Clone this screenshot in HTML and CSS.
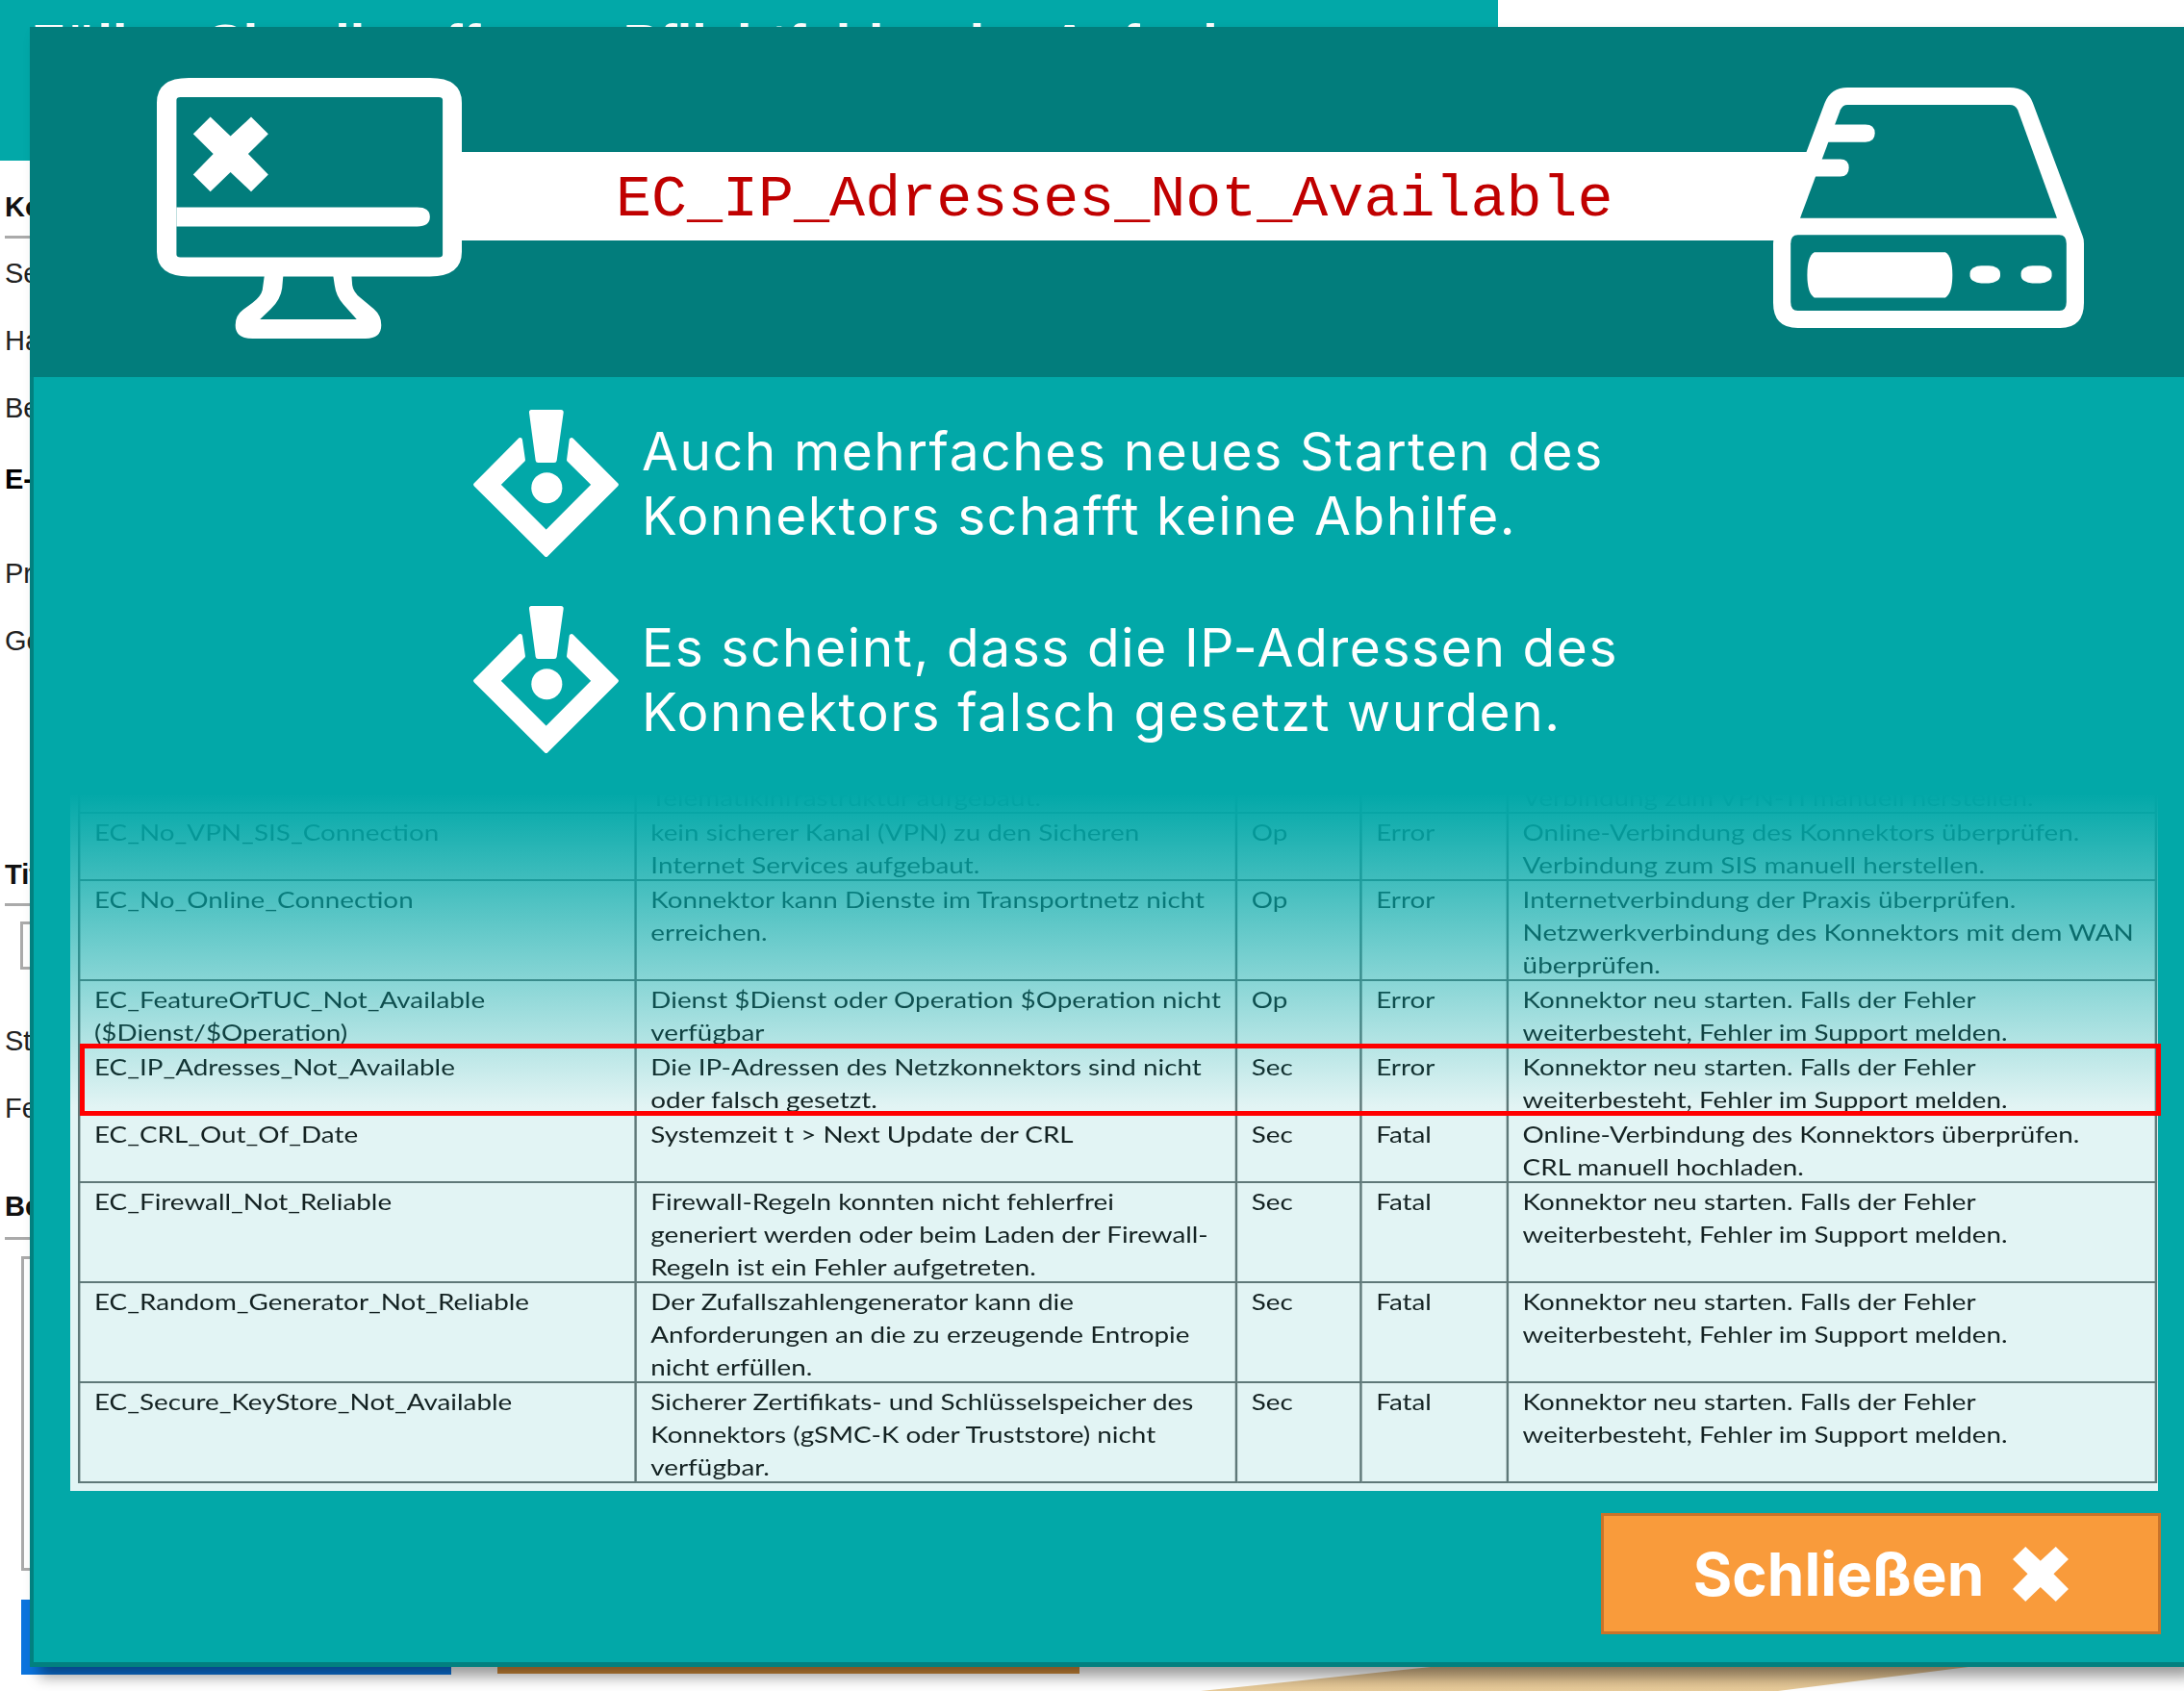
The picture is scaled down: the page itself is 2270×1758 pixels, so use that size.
FILE: index.html
```html
<!DOCTYPE html>
<html lang="de">
<head>
    <meta charset="UTF-8">
    <title>EC_IP_Adresses_Not_Available</title>
    <link rel="stylesheet" href="styles.css">
</head>
<body>
    <!-- Form page behind the dialog, only a sliver of it stays visible -->
    <div class="page">
        <div class="page-band"><h1>Füllen Sie alle offenen Pflichtfelder der Aufgabe</h1></div>
        <div class="form">
            <div class="section-head head-ko">Konnektor</div>
            <div class="field">Seriennummer</div>
            <div class="field">Hardware</div>
            <div class="field">Betreiber</div>
            <div class="label-bold">E-Mail</div>
            <div class="field field-pr">Praxis</div>
            <div class="field">Gerät</div>
            <div class="section-head head-ti">Titel</div>
            <div class="input-box"></div>
            <div class="field field-st">Status</div>
            <div class="field">Fehler</div>
            <div class="section-head head-be">Beschreibung</div>
            <div class="text-box"></div>
            <div class="page-buttons">
                <div class="btn-blue"></div>
                <div class="btn-brown"></div>
            </div>
        </div>
        <div class="desk-stripe"></div>
    </div>

    <!-- Error dialog -->
    <div class="dialog">
        <div class="dialog-head">
            <svg class="icon-monitor" viewBox="320 243 621 814" preserveAspectRatio="none">
                <path fill="#fff" fill-rule="evenodd" d="M385 243H876Q941 243 941 320V786Q941 863 876 863H385Q320 863 320 786V320Q320 243 385 243ZM368 303Q360 303 360 312V794Q360 803 368 803H894Q902 803 902 794V312Q902 303 894 303Z"/>
                <path fill="#fff" d="M360 647H850Q876 647 876 677T850 707H360Z"/>
                <polygon fill="#fff" points="429,365 470,425 512,365 547,418 506,480 547,545 512,598 470,537 429,598 394,545 435,480 394,418"/>
                <path fill="#fff" fill-rule="evenodd" d="M540 850L535 905Q532 925 515 945L495 968Q480 985 480 1015Q480 1057 515 1057H745Q777 1057 777 1015Q777 985 762 965L735 930Q720 912 718 890L716 850H678L682 890Q685 925 700 950L727 997H530L552 965Q572 935 575 900L578 850Z"/>
            </svg>
            <div class="code-band"><span class="code-text">EC_IP_Adresses_Not_Available</span></div>
            <svg class="icon-disk" viewBox="698 272 657 752" preserveAspectRatio="none">
                <path fill="#fff" d="M855 272H1198Q1235 272 1247 320L1352 735Q1355 745 1355 760V945Q1355 1024 1305 1024H750Q698 1024 698 945V760Q698 745 702 735L807 320Q820 272 855 272Z"/>
                <path fill="#027d7c" d="M855 326H1198Q1210 326 1215 342L1298 680H755L840 342Q845 326 855 326Z"/>
                <path fill="#027d7c" d="M750 733H1303Q1318 733 1318 760V943Q1318 970 1303 970H750Q735 970 735 943V760Q735 733 750 733Z"/>
                <path fill="#fff" d="M826 388H893Q913 388 913 415T893 443H812Z"/>
                <path fill="#fff" d="M798 496H840Q858 496 858 523T840 550H784Z"/>
                <path fill="#fff" d="M785 787H1062Q1077 800 1077 858T1062 929H785Q770 916 770 858T785 787Z"/>
                <rect fill="#fff" x="1114" y="829" width="64" height="55" rx="24" ry="24"/>
                <rect fill="#fff" x="1222" y="829" width="65" height="55" rx="24" ry="24"/>
            </svg>
        </div>

        <div class="messages">
            <div class="message">
                <svg class="icon-warn" viewBox="157 82 451 458">
                    <path fill="#fff" stroke="#fff" stroke-width="14" stroke-linejoin="round" d="M302 176L164 315L383 533L601 315L462 176L454 238L532 315L383 465L233 315L311 238Z"/>
                    <path fill="#fff" stroke="#fff" stroke-width="16" stroke-linejoin="round" d="M338 90H429L408 239H358Z"/>
                    <circle fill="#fff" cx="385" cy="325" r="48"/>
                </svg>
                <p>Auch mehrfaches neues Starten des<br>Konnektors schafft keine Abhilfe.</p>
            </div>
            <div class="message">
                <svg class="icon-warn" viewBox="157 82 451 458">
                    <path fill="#fff" stroke="#fff" stroke-width="14" stroke-linejoin="round" d="M302 176L164 315L383 533L601 315L462 176L454 238L532 315L383 465L233 315L311 238Z"/>
                    <path fill="#fff" stroke="#fff" stroke-width="16" stroke-linejoin="round" d="M338 90H429L408 239H358Z"/>
                    <circle fill="#fff" cx="385" cy="325" r="48"/>
                </svg>
                <p>Es scheint, dass die IP-Adressen des<br>Konnektors falsch gesetzt wurden.</p>
            </div>
        </div>

        <div class="table-panel">
            <div class="table-clip">
                <table class="error-table">
                    <colgroup>
                        <col class="col-code"><col class="col-desc"><col class="col-type"><col class="col-level"><col class="col-action">
                    </colgroup>
                    <!-- Row above the fade, only its last line shows faintly -->
                    <tr class="row-faded">
                        <td></td>
                        <td><p><br>Telematikinfrastruktur aufgebaut.</p></td>
                        <td></td>
                        <td></td>
                        <td><p><br>Verbindung zum VPN-TI manuell herstellen.</p></td>
                    </tr>
                    <tr>
                        <td><p>EC_No_VPN_SIS_Connection</p></td>
                        <td><p>kein sicherer Kanal (VPN) zu den Sicheren<br>Internet Services aufgebaut.</p></td>
                        <td><p>Op</p></td>
                        <td><p>Error</p></td>
                        <td><p>Online-Verbindung des Konnektors überprüfen.<br>Verbindung zum SIS manuell herstellen.</p></td>
                    </tr>
                    <tr>
                        <td><p>EC_No_Online_Connection</p></td>
                        <td><p>Konnektor kann Dienste im Transportnetz nicht<br>erreichen.</p></td>
                        <td><p>Op</p></td>
                        <td><p>Error</p></td>
                        <td><p>Internetverbindung der Praxis überprüfen.<br>Netzwerkverbindung des Konnektors mit dem WAN<br>überprüfen.</p></td>
                    </tr>
                    <tr>
                        <td><p>EC_FeatureOrTUC_Not_Available<br>($Dienst/$Operation)</p></td>
                        <td><p>Dienst $Dienst oder Operation $Operation nicht<br>verfügbar</p></td>
                        <td><p>Op</p></td>
                        <td><p>Error</p></td>
                        <td><p>Konnektor neu starten. Falls der Fehler<br>weiterbesteht, Fehler im Support melden.</p></td>
                    </tr>
                    <tr>
                        <td><p>EC_IP_Adresses_Not_Available</p></td>
                        <td><p>Die IP-Adressen des Netzkonnektors sind nicht<br>oder falsch gesetzt.</p></td>
                        <td><p>Sec</p></td>
                        <td><p>Error</p></td>
                        <td><p>Konnektor neu starten. Falls der Fehler<br>weiterbesteht, Fehler im Support melden.</p></td>
                    </tr>
                    <tr>
                        <td><p>EC_CRL_Out_Of_Date</p></td>
                        <td><p>Systemzeit t &gt; Next Update der CRL</p></td>
                        <td><p>Sec</p></td>
                        <td><p>Fatal</p></td>
                        <td><p>Online-Verbindung des Konnektors überprüfen.<br>CRL manuell hochladen.</p></td>
                    </tr>
                    <tr>
                        <td><p>EC_Firewall_Not_Reliable</p></td>
                        <td><p>Firewall-Regeln konnten nicht fehlerfrei<br>generiert werden oder beim Laden der Firewall-<br>Regeln ist ein Fehler aufgetreten.</p></td>
                        <td><p>Sec</p></td>
                        <td><p>Fatal</p></td>
                        <td><p>Konnektor neu starten. Falls der Fehler<br>weiterbesteht, Fehler im Support melden.</p></td>
                    </tr>
                    <tr>
                        <td><p>EC_Random_Generator_Not_Reliable</p></td>
                        <td><p>Der Zufallszahlengenerator kann die<br>Anforderungen an die zu erzeugende Entropie<br>nicht erfüllen.</p></td>
                        <td><p>Sec</p></td>
                        <td><p>Fatal</p></td>
                        <td><p>Konnektor neu starten. Falls der Fehler<br>weiterbesteht, Fehler im Support melden.</p></td>
                    </tr>
                    <tr>
                        <td><p>EC_Secure_KeyStore_Not_Available</p></td>
                        <td><p>Sicherer Zertifikats- und Schlüsselspeicher des<br>Konnektors (gSMC-K oder Truststore) nicht<br>verfügbar.</p></td>
                        <td><p>Sec</p></td>
                        <td><p>Fatal</p></td>
                        <td><p>Konnektor neu starten. Falls der Fehler<br>weiterbesteht, Fehler im Support melden.</p></td>
                    </tr>
                </table>
                <div class="table-fade"></div>
            </div>
            <div class="row-marker"></div>
        </div>

        <div class="dialog-foot">
            <button class="close-btn" type="button">
                Schließen
                <svg class="icon-x" viewBox="394 365 153 233" preserveAspectRatio="none">
                    <polygon fill="#fff" points="429,365 470,425 512,365 547,418 506,480 547,545 512,598 470,537 429,598 394,545 435,480 394,418"/>
                </svg>
            </button>
        </div>
    </div>
</body>
</html>
```

FILE: styles.css
```css
/* Reset */
body, h1, p {
    margin: 0;
    padding: 0;
}

body {
    width: 2270px;
    height: 1758px;
    overflow: hidden;
    position: relative;
    background-color: #fff;
    font-family: "Liberation Sans", Arial, sans-serif;
}

/* Form page behind the dialog */
.page {
    height: 1758px;
    position: relative;
}

.page-band {
    width: 1557px;
    height: 167px;
    background-color: #02a8a8;
    overflow: hidden;
}

.page-band h1 {
    margin: 12px 0 0 33px;
    color: #fff;
    font-size: 56px;
    line-height: 66px;
    font-weight: bold;
    white-space: nowrap;
    word-spacing: 2px;
}

.form {
    padding-left: 5px;
    font-size: 29px;
    line-height: 32px;
    color: #222;
}

.section-head {
    font-weight: bold;
    color: #111;
    padding-bottom: 14px;
    border-bottom: 3px solid #aaa;
}

.head-ko { margin-top: 32px; }
.head-ti { margin-top: 173px; }
.head-be { margin-top: 32px; padding-bottom: 16px; }

.field {
    height: 70px;
}

.head-ko + .field { margin-top: 20px; }
.field-pr { margin-top: 66px; }
.field-st { margin-top: 58px; }

.label-bold {
    margin-top: 4px;
    font-weight: bold;
    color: #000;
}

.input-box {
    margin: 16px 0 0 16px;
    width: 200px;
    height: 50px;
    border: 3px solid #aaa;
    box-sizing: border-box;
}

.text-box {
    margin: 17px 0 0 17px;
    width: 400px;
    height: 327px;
    border: 3px solid #aaa;
    box-sizing: border-box;
}

.page-buttons {
    display: flex;
    gap: 48px;
    margin: 30px 0 0 17px;
}

.btn-blue {
    width: 447px;
    height: 78px;
    background-color: #0b74de;
}

.btn-brown {
    width: 605px;
    height: 77px;
    background-color: #d08a3a;
}

/* Desk corner in the background picture */
.desk-stripe {
    position: absolute;
    left: 1248px;
    top: 1733px;
    width: 800px;
    height: 25px;
    background: linear-gradient(#d9b98a, #e8cc9a);
    clip-path: polygon(239px 0, 798px 0, 600px 100%, 0 100%);
}

/* Dialog */
.dialog {
    position: absolute;
    left: 31px;
    top: 28px;
    width: 2239px;
    height: 1705px;
    box-sizing: border-box;
    display: flex;
    flex-direction: column;
    background-color: #02a8a8;
    border-left: 4px solid #02807f;
    border-bottom: 5px solid #02807f;
    box-shadow: 10px 10px 14px rgba(0, 0, 0, 0.4);
}

.dialog-head {
    height: 364px;
    flex: none;
    margin-left: -4px;
    padding-left: 132px;
    display: flex;
    align-items: flex-start;
    background-color: #027d7c;
    position: relative;
}

.icon-monitor {
    width: 317px;
    height: 271px;
    margin-top: 53px;
    flex: none;
    position: relative;
}

.code-band {
    width: 1408px;
    height: 92px;
    margin-top: 130px;
    flex: none;
    background-color: #fff;
    box-sizing: border-box;
    padding-left: 160px;
}

.code-text {
    font-family: "Liberation Mono", "Courier New", monospace;
    font-size: 61.7px;
    line-height: 100px;
    color: #c00000;
    white-space: nowrap;
}

/* Disk sits on top of the end of the white band */
.icon-disk {
    position: absolute;
    left: 1812px;
    top: 63px;
    width: 323px;
    height: 250px;
}

.messages {
    flex: none;
    padding: 34px 0 0 457px;
    display: flex;
    flex-direction: column;
    gap: 51px;
}

.message {
    display: flex;
    align-items: center;
    gap: 24px;
    height: 153px;
}

.icon-warn {
    width: 151px;
    height: 153px;
    flex: none;
}

.message p {
    color: #fff;
    font-family: Inter, "Open Sans", sans-serif;
    font-size: 55px;
    line-height: 67px;
    font-weight: 400;
    letter-spacing: 1.6px;
    white-space: nowrap;
}

/* Table picture */
.table-panel {
    margin: 42px 0 0 38px;
    width: 2170px;
    height: 725px;
    flex: none;
    position: relative;
}

.table-clip {
    width: 100%;
    height: 100%;
    overflow: hidden;
    position: relative;
    background-color: #e2f4f4;
}

.error-table {
    width: 1784px;
    margin: -51px 0 0 8px;
    table-layout: fixed;
    border-collapse: collapse;
    font-family: Lato, "Open Sans", sans-serif;
    font-size: 23px;
    line-height: 34px;
    color: #142222;
    white-space: nowrap;
    transform: scaleX(1.21);
    transform-origin: 0 0;
    filter: blur(0.5px);
}

.col-code { width: 478px; }
.col-desc { width: 516px; }
.col-type { width: 107px; }
.col-level { width: 126px; }
.col-action { width: 557px; }

.error-table td {
    border: 2px solid #5f7878;
    padding: 0 0 0 12px;
    vertical-align: top;
}

.error-table p {
    margin: 2px 0 -2px;
}

.row-faded {
    height: 70px;
}

.table-fade {
    position: absolute;
    left: 0;
    top: 0;
    right: 0;
    bottom: 0;
    background: linear-gradient(#02a8a8 0, rgba(2, 168, 168, 0) 45%);
}

.row-marker {
    position: absolute;
    left: 10px;
    top: 260px;
    width: 2163px;
    height: 75px;
    box-sizing: border-box;
    border: 5px solid #f00;
}

/* Footer with the close button */
.dialog-foot {
    flex: none;
    display: flex;
    justify-content: flex-end;
    padding: 23px 24px 0 0;
}

.close-btn {
    width: 582px;
    height: 126px;
    box-sizing: border-box;
    display: flex;
    align-items: center;
    justify-content: center;
    gap: 30px;
    background-color: #f99b3b;
    border: 3px solid #c9732a;
    color: #fff;
    font-family: Inter, "Open Sans", sans-serif;
    font-size: 62px;
    font-weight: 700;
}

.icon-x {
    width: 58px;
    height: 57px;
}
```
